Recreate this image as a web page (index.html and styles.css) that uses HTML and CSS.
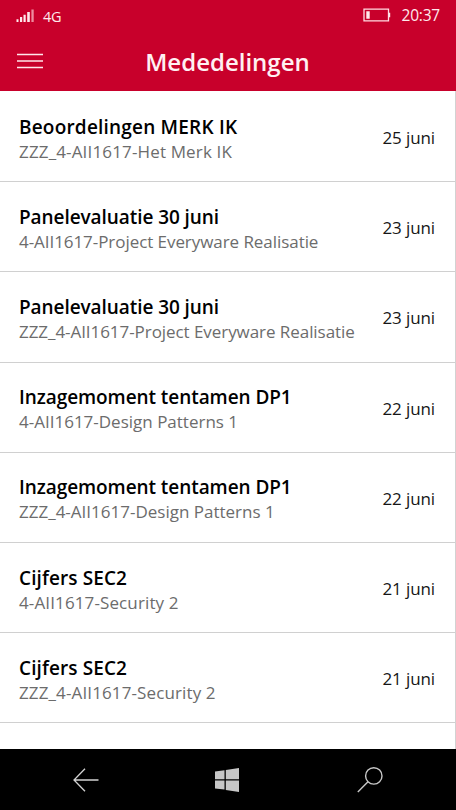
FILE: index.html
```html
<!DOCTYPE html>
<html lang="nl">
<head>
<meta charset="utf-8">
<title>Mededelingen</title>
<link rel="stylesheet" href="styles.css">
</head>
<body>
<div class="phone">
  <header class="header">
    <div class="status">
      <svg class="signal" width="19" height="15" viewBox="0 0 19 15">
        <path fill="#ffe9ec" d="M.5 11.300h2v2.700h-2zM4 9h2.200v5H4zM7.500 6.800h2.200V14H7.500zM11.200 4h2.600v10h-2.600z"/>
        <path fill="#ee8c9f" d="M15.400 1.500h2.300V14h-2.300z"/>
      </svg>
      <span class="network">4G</span>
      <svg class="battery" width="28" height="14" viewBox="0 0 28 14">
        <path fill="none" stroke="#ffdce2" stroke-width="1.300" d="M1 1.200h24.500v11.600H1z"/>
        <path fill="#ffe9ec" d="M3.300 3.300h3.400v7.400H3.300zM25.700 4.800h1.500v4.400h-1.500z"/>
      </svg>
      <span class="clock">20:37</span>
    </div>
    <div class="titlebar">
      <svg class="menu" width="26" height="16" viewBox="0 0 26 16">
        <path stroke="#ffe6ea" stroke-width="1.600" d="M0 1.500h26M0 8h26M0 14.500h26"/>
      </svg>
      <h1 class="heading">Mededelingen</h1>
    </div>
  </header>
  <main class="list">
    <article class="row"><div class="text"><h2 class="title title-caps">Beoordelingen MERK IK</h2><p class="course course-merk">ZZZ_4-AII1617-Het Merk IK</p></div><time class="date">25 juni</time></article>
    <article class="row"><div class="text"><h2 class="title">Panelevaluatie 30 juni</h2><p class="course">4-AII1617-Project Everyware Realisatie</p></div><time class="date">23 juni</time></article>
    <article class="row"><div class="text"><h2 class="title">Panelevaluatie 30 juni</h2><p class="course">ZZZ_4-AII1617-Project Everyware Realisatie</p></div><time class="date">23 juni</time></article>
    <article class="row"><div class="text"><h2 class="title">Inzagemoment tentamen DP1</h2><p class="course course-short">4-AII1617-Design Patterns 1</p></div><time class="date">22 juni</time></article>
    <article class="row"><div class="text"><h2 class="title">Inzagemoment tentamen DP1</h2><p class="course course-short">ZZZ_4-AII1617-Design Patterns 1</p></div><time class="date">22 juni</time></article>
    <article class="row"><div class="text"><h2 class="title title-short">Cijfers SEC2</h2><p class="course course-security">4-AII1617-Security 2</p></div><time class="date">21 juni</time></article>
    <article class="row"><div class="text"><h2 class="title title-short">Cijfers SEC2</h2><p class="course course-security">ZZZ_4-AII1617-Security 2</p></div><time class="date">21 juni</time></article>
  </main>
  <nav class="navbar">
    <svg class="back" width="26" height="24" viewBox="0 0 26 24">
      <path fill="none" stroke="#d2d2d2" stroke-width="1.300" d="M12 .8L1 12l11 11.200M1 12h24.500"/>
    </svg>
    <svg class="home" width="24" height="24" viewBox="0 0 24 24">
      <path fill="#c6c6c6" d="M0 3.500l9.500-1.200v8.900H0zM10.800 2.100L24 0v11.200H10.800zM0 12.600h9.500v9L0 20.400zM10.800 12.600H24V24l-13.200-2.100z"/>
    </svg>
    <svg class="search" width="26" height="26" viewBox="0 0 26 26">
      <g fill="none" stroke="#c8c8c8" stroke-width="1.400"><circle cx="16.800" cy="8.900" r="8.200"/><path d="M11 14.700L.8 25"/></g>
    </svg>
  </nav>
</div>
</body>
</html>
```

FILE: styles.css
```css
* { box-sizing: border-box; }

body {
  margin: 0;
  background: #fff;
  color: #000;
  font-family: "Open Sans", "Noto Sans", sans-serif;
}

h1, h2, p { margin: 0; }
svg { display: block; flex: none; }

.phone {
  display: flex;
  flex-direction: column;
  width: 456px;
  height: 810px;
  overflow: hidden;
}

.header {
  flex: none;
  height: 91px;
  background: #c8002b;
  color: #ffe9ec;
}

.status {
  display: flex;
  align-items: center;
  height: 30px;
  padding: 0 16px;
}

.network { margin-left: 8px; font-size: 14.500px; letter-spacing: -0.2px; padding-top: 2px; }
.battery { margin-left: auto; }
.clock { margin-left: 10px; font-size: 15.500px; letter-spacing: -0.2px; }

.titlebar {
  display: grid;
  grid-template-columns: 26px 1fr 26px;
  align-items: center;
  height: 61px;
  padding: 3px 18px 0 17px;
}

.menu { margin-bottom: 2px; }

.heading {
  text-align: center;
  font-size: 24px;
  font-weight: 600;
  line-height: 32px;
  color: #fff0f2;
}

.list {
  flex: 1;
  min-height: 0;
  padding-top: 1px;
  border-right: 1px solid #d2d2d2;
}

.row {
  display: flex;
  align-items: center;
  justify-content: space-between;
  height: 90.200px;
  padding: 3px 20px 0 19px;
  border-bottom: 1px solid #d0d0d0;
  white-space: nowrap;
}

.title { padding-top: 2px; font-size: 19px; font-weight: 600; line-height: 24px; letter-spacing: -0.07px; }
.title-caps { letter-spacing: 0.2px; }
.title-short { letter-spacing: 0.1px; }
.course { font-size: 17px; line-height: 25px; letter-spacing: -0.06px; color: #6c6c6c; }
.course-short { letter-spacing: 0; }
.course-merk { letter-spacing: 0.15px; }
.course-security { letter-spacing: 0.12px; }
.date { font-size: 17px; line-height: 24px; letter-spacing: -0.1px; color: #161616; }

.navbar {
  flex: none;
  display: flex;
  align-items: center;
  justify-content: space-between;
  height: 61px;
  padding: 0 73px;
  background: #000;
}

.home { margin-right: 3px; }
```
